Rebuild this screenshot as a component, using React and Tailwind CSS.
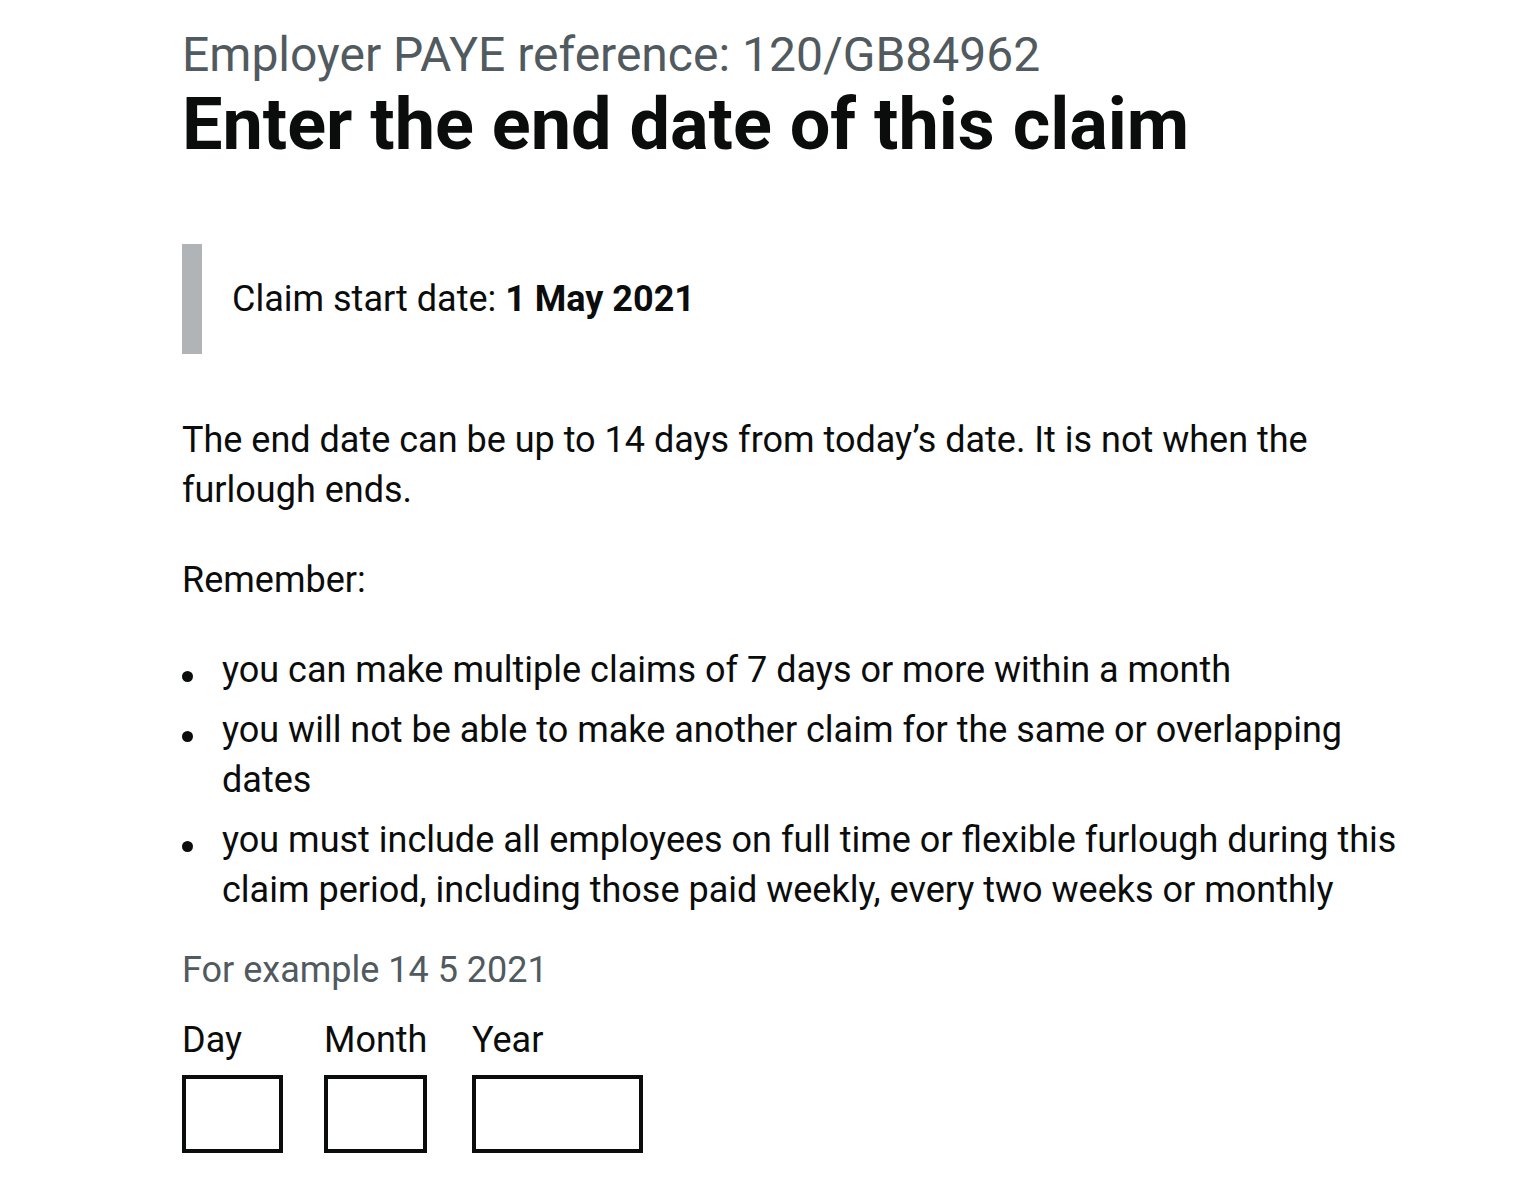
const items = [
  'you can make multiple claims of 7 days or more within a month',
  'you will not be able to make another claim for the same or overlapping dates',
  'you must include all employees on full time or flexible furlough during this claim period, including those paid weekly, every two weeks or monthly',
]

export default function App() {
  return (
    <div className="min-h-screen bg-white pl-[182px] text-[#0b0c0c]" style={{ fontFamily: 'Roboto, "Noto Sans", sans-serif' }}>
      <div className="w-[1240px] pt-[25px]">
        <span className="block text-[48px] leading-[60px] text-[#505a5f]">Employer PAYE reference: 120/GB84962</span>
        <h1 className="text-[72px] font-bold leading-[80px]">Enter the end date of this claim</h1>

        <div className="mt-[79px] border-l-[20px] border-[#b1b4b6] py-[30px] pl-[30px] text-[36px] leading-[50px]">
          Claim start date: <strong className="font-bold">1 May 2021</strong>
        </div>

        <div className="mt-[61px] text-[36px] leading-[50px]">
          <p className="mb-[40px]">
            The end date can be up to 14 days from today’s date. It is not when the furlough ends.
          </p>
          <p className="mb-[40px]">Remember:</p>
          <ul>
            {items.map((item, i) => (
              <li key={i} className={`flex ${i < items.length - 1 ? 'mb-[10px]' : ''}`}>
                <span className="w-[40px] shrink-0">
                  <span className="mt-[26px] block h-[11px] w-[11px] rounded-full bg-[#0b0c0c]" />
                </span>
                <span>{item}</span>
              </li>
            ))}
          </ul>
        </div>

        <div className="mt-[30px] text-[36px] leading-[50px] text-[#505a5f]">For example 14 5 2021</div>

        <div className="mt-[20px] flex text-[36px] leading-[50px]">
          <div className="w-[101px]">
            <label className="block">Day</label>
            <input className="mt-[10px] h-[78px] w-[101px] border-4 border-[#0b0c0c] outline-none" />
          </div>
          <div className="ml-[41px] w-[103px]">
            <label className="block">Month</label>
            <input className="mt-[10px] h-[78px] w-[103px] border-4 border-[#0b0c0c] outline-none" />
          </div>
          <div className="ml-[45px] w-[171px]">
            <label className="block">Year</label>
            <input className="mt-[10px] h-[78px] w-[171px] border-4 border-[#0b0c0c] outline-none" />
          </div>
        </div>
      </div>
    </div>
  )
}
